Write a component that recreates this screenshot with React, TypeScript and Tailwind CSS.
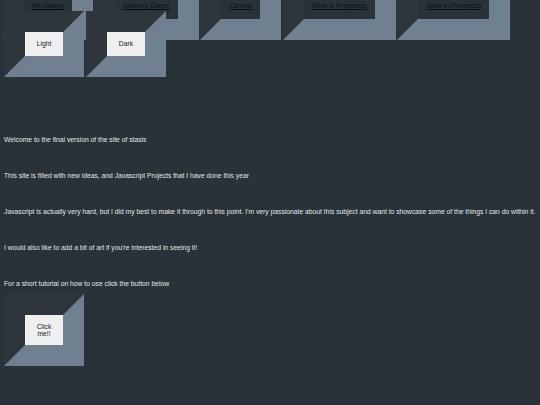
import React from 'react';

const navLinks = ['Art Gallery', 'Memory Game!', 'Canvas', 'Work in Progresss', 'Work in Progresss'];

const paragraphs = [
  'Welcome to the final version of the site of stasis',
  'This site is filled with new ideas, and Javascript Projects that I have done this year',
  "Javascript is actually very hard, but I did my best to make it through to this point. I'm very passionate about this subject and want to showcase some of the things I can do within it.",
  "I would also like to add a bit of art if you're interested in seeing it!",
  'For a short tutorial on how to use click the button below',
];

// thick bevel frame: dark top/left, slate bottom/right
const frame =
  'border-solid border-[21px] border-t-[#2e353c] border-l-[#2e353c] border-r-[#708090] border-b-[#708090]';

function NavItem({ label }: { label: string }) {
  return (
    <div className={`${frame} shrink-0`}>
      <div className="h-[20px] px-[8px] pt-[3px] leading-[8px] bg-[#283238]">
        <a href="#" className="text-[#0d1012] underline whitespace-nowrap">
          {label}
        </a>
      </div>
    </div>
  );
}

function FrameButton({ label, tall }: { label: string; tall?: boolean }) {
  return (
    <div className={`${frame} shrink-0`}>
      <button
        className={`w-[38px] ${tall ? 'h-[30px]' : 'h-[24px]'} bg-[#efefef] text-[#222] leading-[7.5px] flex items-center justify-center text-center px-[6px]`}
      >
        {label}
      </button>
    </div>
  );
}

export default function App() {
  return (
    <div
      className="w-[540px] h-[405px] overflow-hidden bg-[#283238] px-[4px] text-[6.75px]"
      style={{ fontFamily: '"Liberation Sans", Arial, sans-serif' }}
    >
      <nav className="flex gap-[1.5px] -ml-[1px] -mt-[22px]">
        {navLinks.map((l, i) => (
          <NavItem key={i} label={l} />
        ))}
      </nav>
      <div className="relative flex gap-[2px] -mt-[29px]">
        <FrameButton label="Light" />
        <FrameButton label="Dark" />
      </div>
      <div className="mt-[59px] flex flex-col gap-[28px] leading-[8px] text-[#e4e6e8]">
        {paragraphs.map((p, i) => (
          <p key={i}>{p}</p>
        ))}
      </div>
      <div className="mt-[6px] flex">
        <FrameButton label="Click me!!" tall />
      </div>
    </div>
  );
}
